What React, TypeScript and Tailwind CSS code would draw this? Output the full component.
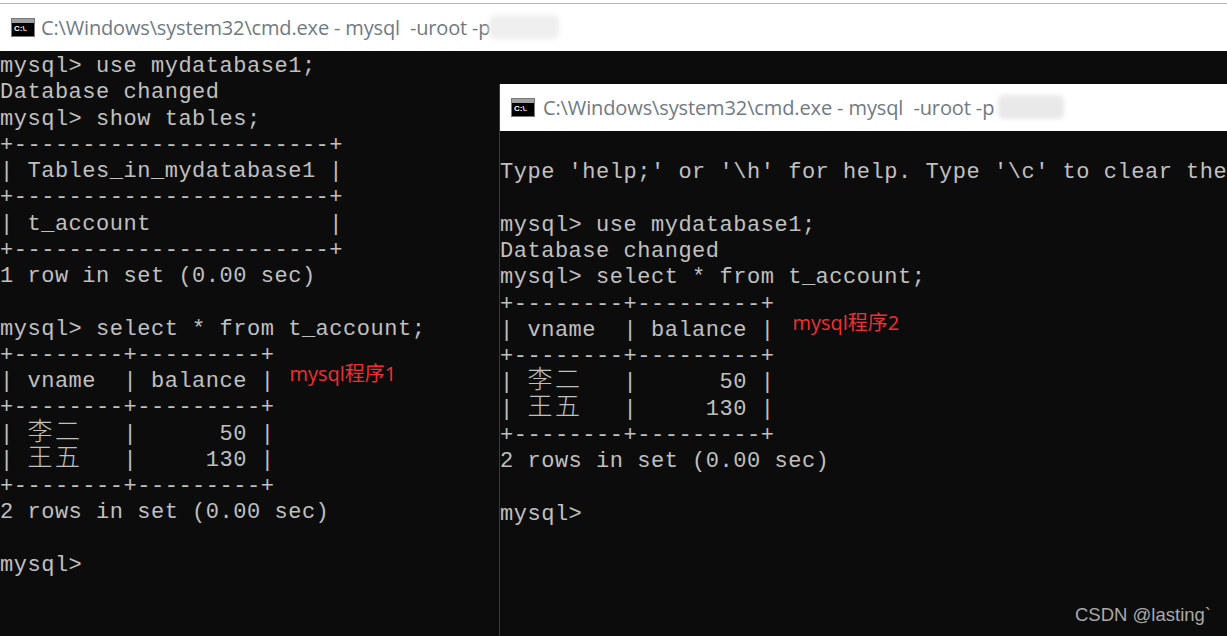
const mono = 'font-["Liberation_Mono","Noto_Sans_CJK_SC",monospace]'

function CmdIcon() {
  return (
    <div className="flex h-[19px] w-[24px] shrink-0 flex-col border border-[#7a7a7a] bg-black">
      <div className="h-[4px] bg-[#a0a0a0]" />
      <div className="pl-[2px] font-['Liberation_Sans',sans-serif] text-[8px] leading-[12px] font-bold text-white">C:\.</div>
    </div>
  )
}

function TitleBar({ textClass, children }: { textClass: string; children: React.ReactNode }) {
  return (
    <div className="flex h-[47px] items-center bg-white pl-[11px]">
      <CmdIcon />
      <span className={`relative whitespace-pre font-['Open_Sans',sans-serif] text-[20px] text-[#6f7a84] ${textClass}`}>
        C:\Windows\system32\cmd.exe - mysql  -uroot -p
        {children}
      </span>
    </div>
  )
}

function Cjk({ children }: { children: string }) {
  return <span className="font-['Noto_Sans_CJK_SC',sans-serif] text-[25px] leading-[0] font-light tracking-[2.44px]">{children}</span>
}

function Label({ className, children }: { className: string; children: string }) {
  return (
    <span className={`relative -top-[6px] font-['Open_Sans','Noto_Sans_CJK_SC',sans-serif] text-[20px] leading-[0] tracking-normal text-[#f03030] ${className}`}>
      {children}
    </span>
  )
}

function Console({ lines }: { lines: React.ReactNode[] }) {
  return (
    <div className="text-[22px] leading-[26.25px] tracking-[0.52px] whitespace-pre text-[#c0c0c0]">
      {lines.map((line, i) => (
        <div key={i} className="h-[26.25px]">{line}</div>
      ))}
    </div>
  )
}

const resultRows = (label: React.ReactNode): React.ReactNode[] => [
  '+--------+---------+',
  <>| vname  | balance |{label}</>,
  '+--------+---------+',
  <>| <Cjk>李二</Cjk>   |      50 |</>,
  <>| <Cjk>王五</Cjk>   |     130 |</>,
  '+--------+---------+',
]

const leftLines: React.ReactNode[] = [
  'mysql> use mydatabase1;',
  'Database changed',
  'mysql> show tables;',
  '+-----------------------+',
  '| Tables_in_mydatabase1 |',
  '+-----------------------+',
  '| t_account             |',
  '+-----------------------+',
  '1 row in set (0.00 sec)',
  ' ',
  'mysql> select * from t_account;',
  ...resultRows(<Label className="ml-[15px]">mysql程序1</Label>),
  '2 rows in set (0.00 sec)',
  ' ',
  'mysql>',
]

const rightLines: React.ReactNode[] = [
  ' ',
  "Type 'help;' or '\\h' for help. Type '\\c' to clear the",
  ' ',
  'mysql> use mydatabase1;',
  'Database changed',
  'mysql> select * from t_account;',
  ...resultRows(<Label className="ml-[18px]">mysql程序2</Label>),
  '2 rows in set (0.00 sec)',
  ' ',
  'mysql>',
]

export default function App() {
  return (
    <div className={`relative h-[636px] w-[1227px] overflow-hidden bg-[#0c0c0c] ${mono}`}>
      {/* window 1 */}
      <div className="h-[4px] border-b border-[#b8b8b8] bg-white" />
      <TitleBar textClass="ml-[6px] tracking-[-0.16px]">
        <span className="absolute top-[2px] left-[448px] h-[24px] w-[70px] rounded-md bg-[#efefef] blur-[2px]" />
      </TitleBar>
      <div className="pt-[3px]">
        <Console lines={leftLines} />
      </div>

      {/* window 2 */}
      <div className="absolute top-[84px] bottom-0 left-[499px] w-[728px] overflow-hidden border-l border-[#3a3a3a] bg-[#0c0c0c]">
        <TitleBar textClass="ml-[8px] tracking-[-0.12px]">
          <span className="absolute top-[2px] left-[455px] h-[24px] w-[66px] rounded-md bg-[#e9e9e9] blur-[2px]" />
        </TitleBar>
        <div className="pt-[3px]">
          <Console lines={rightLines} />
        </div>
      </div>

      <span className="absolute top-[604px] left-[1075px] font-['Liberation_Sans',sans-serif] text-[18.5px] leading-[22px] text-[#a9a9a9]">CSDN @lasting`</span>
    </div>
  )
}
